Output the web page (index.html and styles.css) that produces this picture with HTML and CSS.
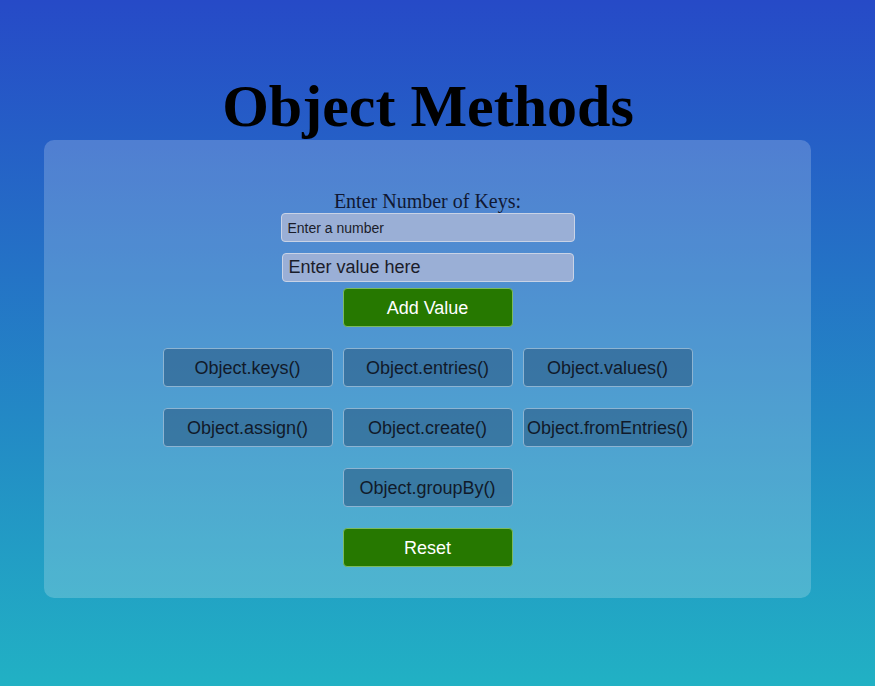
FILE: index.html
```html
<!DOCTYPE html>
<html>
<head>
<meta charset="utf-8">
<title>Object Methods</title>
<link rel="stylesheet" href="styles.css">
</head>
<body>
<h1 class="title">Object Methods</h1>
<div class="card">
  <label class="label" for="num">Enter Number of Keys:</label>
  <input class="input small" id="num" type="text" placeholder="Enter a number">
  <input class="input big" type="text" placeholder="Enter value here">
  <button class="btn green add">Add Value</button>
  <div class="grid">
    <button class="btn method">Object.keys()</button>
    <button class="btn method">Object.entries()</button>
    <button class="btn method">Object.values()</button>
    <button class="btn method">Object.assign()</button>
    <button class="btn method">Object.create()</button>
    <button class="btn method">Object.fromEntries()</button>
  </div>
  <button class="btn method single">Object.groupBy()</button>
  <button class="btn green reset">Reset</button>
</div>
</body>
</html>
```
FILE: styles.css
```css
html, body {
  margin: 0;
  padding: 0;
}
body {
  width: 875px;
  height: 686px;
  background: linear-gradient(to bottom, #264ac7 0%, #21b1c4 100%);
  overflow: hidden;
  font-family: "Liberation Serif", serif;
}
.title {
  margin: 0;
  padding-top: 73px;
  width: 856px;
  text-align: center;
  font-family: "Liberation Serif", serif;
  font-weight: bold;
  font-size: 60px;
  line-height: 67px;
  color: #000;
}
.card {
  margin-left: 44px;
  width: 767px;
  box-sizing: border-box;
  padding: 50px 0 31px;
  background: rgba(255, 255, 255, 0.2);
  border-radius: 10px;
  display: flex;
  flex-direction: column;
  align-items: center;
}
.label {
  font-family: "Liberation Serif", serif;
  font-size: 20px;
  line-height: 23px;
  color: #101833;
}
.input {
  box-sizing: border-box;
  height: 29px;
  background: #9aafd6;
  border: 1px solid #c9d3e6;
  border-radius: 4px;
  font-family: "Liberation Sans", Arial, sans-serif;
  color: #111;
  outline: none;
}
.input::placeholder {
  color: #1a1d2a;
  opacity: 1;
}
.input.small {
  width: 294px;
  font-size: 14px;
  padding: 0 6px;
}
.input.big {
  width: 292px;
  margin-top: 11px;
  font-size: 18px;
  padding: 0 6px;
}
.btn {
  box-sizing: border-box;
  width: 170px;
  height: 39px;
  border-radius: 4px;
  font-family: "Liberation Sans", Arial, sans-serif;
  font-size: 18px;
  padding: 2px 0 0;
  cursor: pointer;
}
.green {
  background: #267800;
  border: 1px solid #7cba5e;
  color: #fff;
}
.method {
  border: 1px solid #8db4d2;
  color: #111a2a;
  background-color: rgba(44, 92, 134, 0.6);
}
.add {
  margin-top: 6px;
}
.grid {
  margin-top: 21px;
  display: grid;
  grid-template-columns: repeat(3, 170px);
  column-gap: 10px;
  row-gap: 21px;
}
.single {
  margin-top: 21px;
}
.reset {
  margin-top: 21px;
}
```
